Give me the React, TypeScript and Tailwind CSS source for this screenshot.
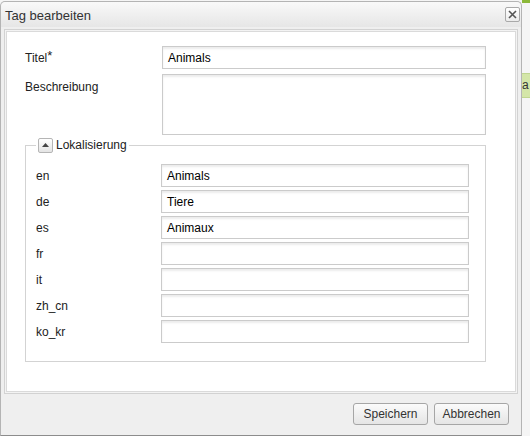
const font = { fontFamily: '"Liberation Sans", Arial, sans-serif' }

const languages = [
  { code: 'en', value: 'Animals' },
  { code: 'de', value: 'Tiere' },
  { code: 'es', value: 'Animaux' },
  { code: 'fr', value: '' },
  { code: 'it', value: '' },
  { code: 'zh_cn', value: '' },
  { code: 'ko_kr', value: '' },
]

function TextField({ value, className }: { value: string; className: string }) {
  return (
    <div
      className={`h-[23px] border border-[#cbcbcb] bg-white shadow-[inset_0_2px_2px_#ececec] pl-[5px] flex items-center text-[12px] text-black ${className}`}
    >
      {value}
    </div>
  )
}

function CloseButton() {
  return (
    <div className="w-[15px] h-[15px] border border-[#a9a9a9] rounded-[2px] bg-gradient-to-b from-white to-[#ececec] flex items-center justify-center">
      <svg width="9" height="9" viewBox="0 0 9 9">
        <path d="M1 1 L8 8 M8 1 L1 8" stroke="#555" strokeWidth="1.6" />
      </svg>
    </div>
  )
}

export default function App() {
  return (
    <div className="w-[530px] h-[436px] bg-[#f5f5f5] flex overflow-hidden" style={font}>
      {/* dialog */}
      <div className="w-[522px] h-[435px] mt-[1px] border border-[#b4b4b4] border-b-[#8c8c8c] rounded-t-[5px] bg-[#efefef] flex flex-col">
        {/* title bar */}
        <div className="h-[25px] flex items-center justify-between pl-[4px] pr-[1px] bg-gradient-to-b from-[#f9f9f9] to-[#e6e6e6] rounded-t-[5px]">
          <span className="text-[13px] text-[#333] pt-[2px]">Tag bearbeiten</span>
          <CloseButton />
        </div>

        {/* body */}
        <div className="mx-[3px] mt-[2px] border border-[#d2d2d2] p-[1px] bg-[#f3f3f3]">
          <div className="h-[361px] border border-[#dadada] bg-white pl-[18px] pt-[14px] text-[12px] text-[#222]">
            <div className="flex items-center">
              <div className="w-[137px]">
                Titel<span className="align-top text-[13px] leading-none">*</span>
              </div>
              <TextField value="Animals" className="w-[324px]" />
            </div>
            <div className="flex mt-[5px]">
              <div className="w-[137px] pt-[4px]">Beschreibung</div>
              <div className="w-[324px] h-[61px] border border-[#cbcbcb] bg-white shadow-[inset_0_2px_2px_#ececec]" />
            </div>

            <fieldset className="w-[461px] mt-[1px] border border-[#d3d3d3] pl-[10px] pr-[16px] pt-[10px] pb-[18px]">
              <legend className="px-[2px] flex items-center gap-[3px] text-[12px] text-[#222]">
                <span className="w-[15px] h-[15px] border border-[#b5b5b5] rounded-[2px] bg-gradient-to-b from-white to-[#e4e4e4] flex items-center justify-center">
                  <svg width="7" height="4" viewBox="0 0 7 4">
                    <path d="M0 4 L3.5 0 L7 4 Z" fill="#444" />
                  </svg>
                </span>
                Lokalisierung
              </legend>
              <div className="flex flex-col gap-[3px]">
                {languages.map((l) => (
                  <div key={l.code} className="flex items-center">
                    <div className="w-[125px]">{l.code}</div>
                    <TextField value={l.value} className="w-[308px]" />
                  </div>
                ))}
              </div>
            </fieldset>
          </div>
        </div>

        {/* footer */}
        <div className="flex-1 flex items-center justify-end gap-[6px] pr-[12px] pb-[1px]">
          <button className="w-[75px] h-[22px] border border-[#a6a6a6] rounded-[3px] bg-gradient-to-b from-[#fbfbfb] to-[#e5e5e5] text-[12px] text-[#333]">
            Speichern
          </button>
          <button className="w-[75px] h-[22px] border border-[#a6a6a6] rounded-[3px] bg-gradient-to-b from-[#fbfbfb] to-[#e5e5e5] text-[12px] text-[#333]">
            Abbrechen
          </button>
        </div>
      </div>

      {/* page behind the dialog */}
      <div className="flex-1 flex flex-col">
        <div className="h-[3px] bg-[#8cb83a]" />
        <div className="mt-[70px] h-[25px] bg-[#d4e6a8] border-y border-[#c0d690] text-[12px] text-[#333] overflow-hidden leading-[23px]">
          a
        </div>
      </div>
    </div>
  )
}
